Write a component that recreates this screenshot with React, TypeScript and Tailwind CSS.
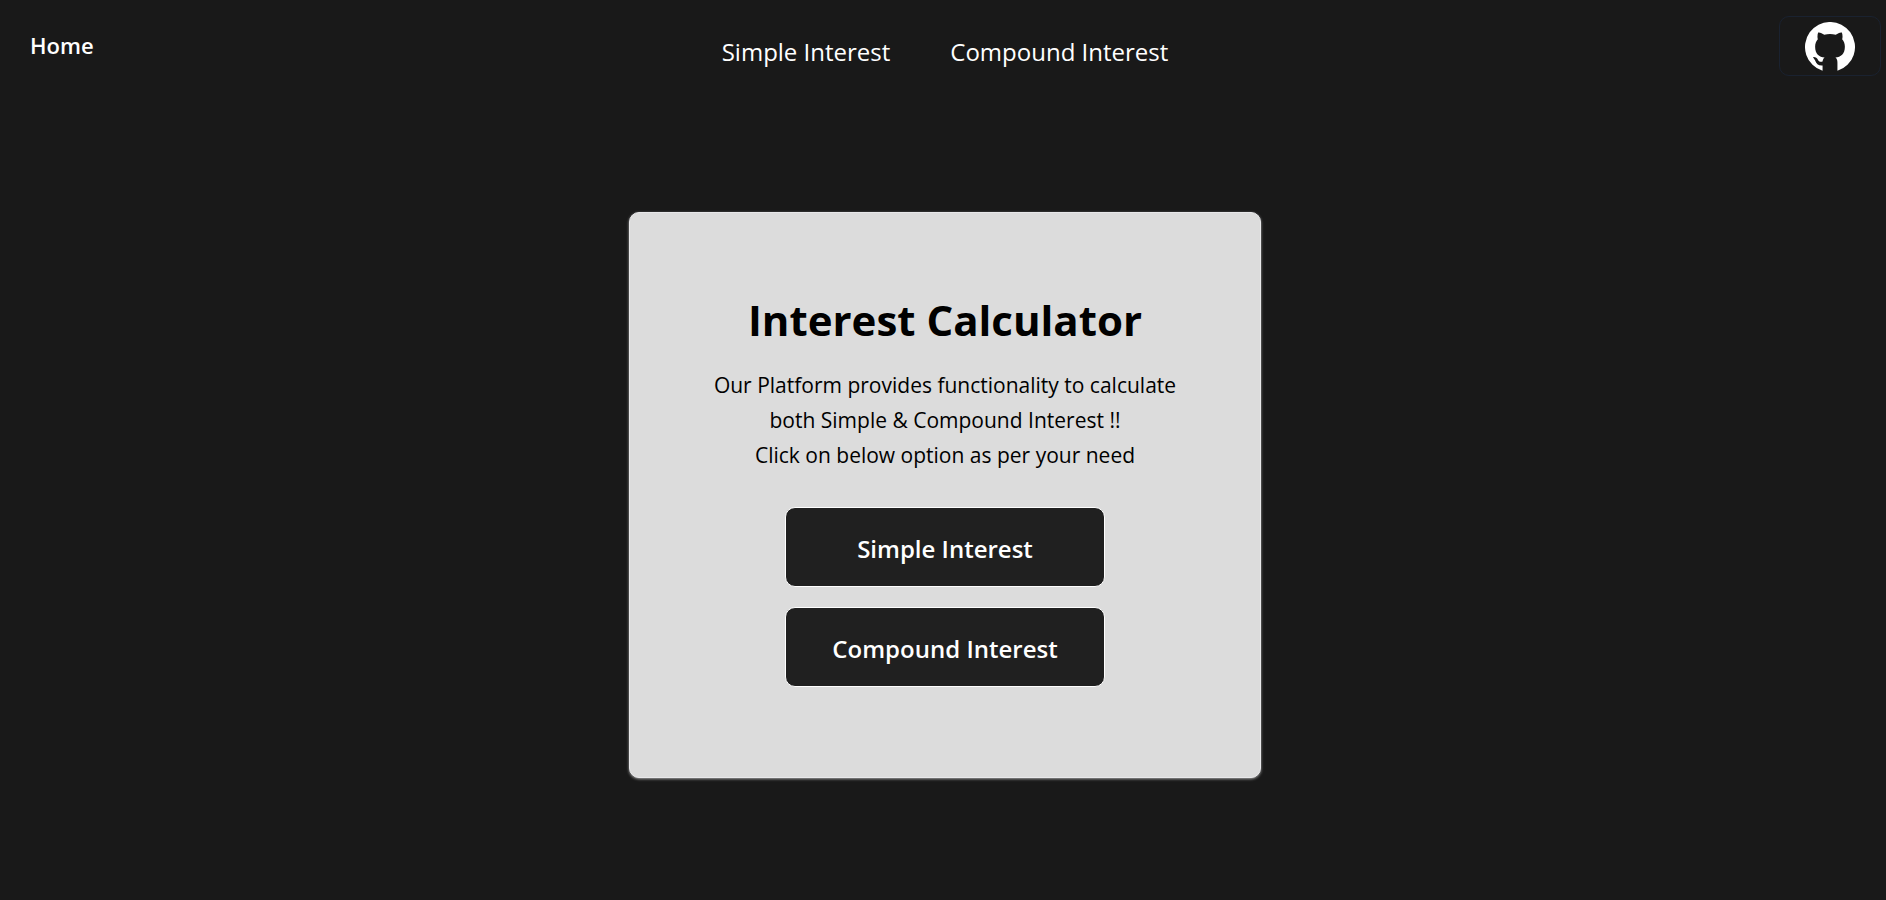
const links = [
  { label: "Simple Interest", href: "#simple" },
  { label: "Compound Interest", href: "#compound" },
];

function GithubMark() {
  return (
    <svg viewBox="0 0 148 148" fill="currentColor" className="size-[50px]" aria-hidden="true">
      <path d="M52 144.6A74 74 0 1 1 96 144.6V120C96 112 94 108 90 105C106 103 118 95 118 73C118 64 115 57 110 51C112 44 111 36 109 31C103 30 97 34 91 38C80 35 68 35 57 38C51 34 45 30 39 31C37 36 36 44 38 51C33 57 30 64 30 73C30 95 42 103 58 105C54 108 53 112 52 117C47 119 42 118 39 113C36 107 30 103 24 104C24 106 28 109 30 114C33 124 40 130 52 129Z" />
    </svg>
  );
}

function Navbar() {
  return (
    <header className="grid grid-cols-[1fr_auto_1fr] items-start pt-4">
      <a href="#home" className="justify-self-start pl-[26px] pt-[13px] text-[22px] leading-8 font-semibold">Home</a>
      <nav className="flex gap-[60px] pt-5">
        {links.map((link) => (
          <a key={link.label} href={link.href} className="text-[24px] leading-8">{link.label}</a>
        ))}
      </nav>
      <a
        href="#github"
        aria-label="GitHub"
        className="mr-[5px] flex h-[60px] w-[102px] items-center justify-center justify-self-end rounded-[10px] border border-[#1a2230] pt-px"
      >
        <GithubMark />
      </a>
    </header>
  );
}

export default function App() {
  return (
    <div className="flex min-h-screen flex-col bg-[#191919] pl-1 font-['Open_Sans','Noto_Sans',sans-serif] text-white">
      <Navbar />
      <main className="mt-[136px] flex flex-col items-center">
        <section className="flex w-full max-w-[632px] flex-col items-center rounded-[10px] border border-[#e8e8ea] bg-[#dcdcdc] px-16 pt-[73px] pb-[90px] text-center text-black shadow-[0_1px_3px_#ffffff99]">
          <h1 className="text-[42px] leading-[68px] font-bold">Interest Calculator</h1>
          <p className="mt-[14px] text-[21px] leading-[35px]">
            Our Platform provides functionality to calculate
            <br />
            both Simple &amp; Compound Interest !!
            <br />
            Click on below option as per your need
          </p>
          <div className="mt-[34px] flex flex-col gap-5">
            {links.map((link) => (
              <button
                key={link.label}
                type="button"
                className="h-20 w-80 rounded-[10px] border border-white bg-[#202020] pt-1 text-[24px] leading-8 font-semibold text-white"
              >
                {link.label}
              </button>
            ))}
          </div>
        </section>
      </main>
    </div>
  );
}
